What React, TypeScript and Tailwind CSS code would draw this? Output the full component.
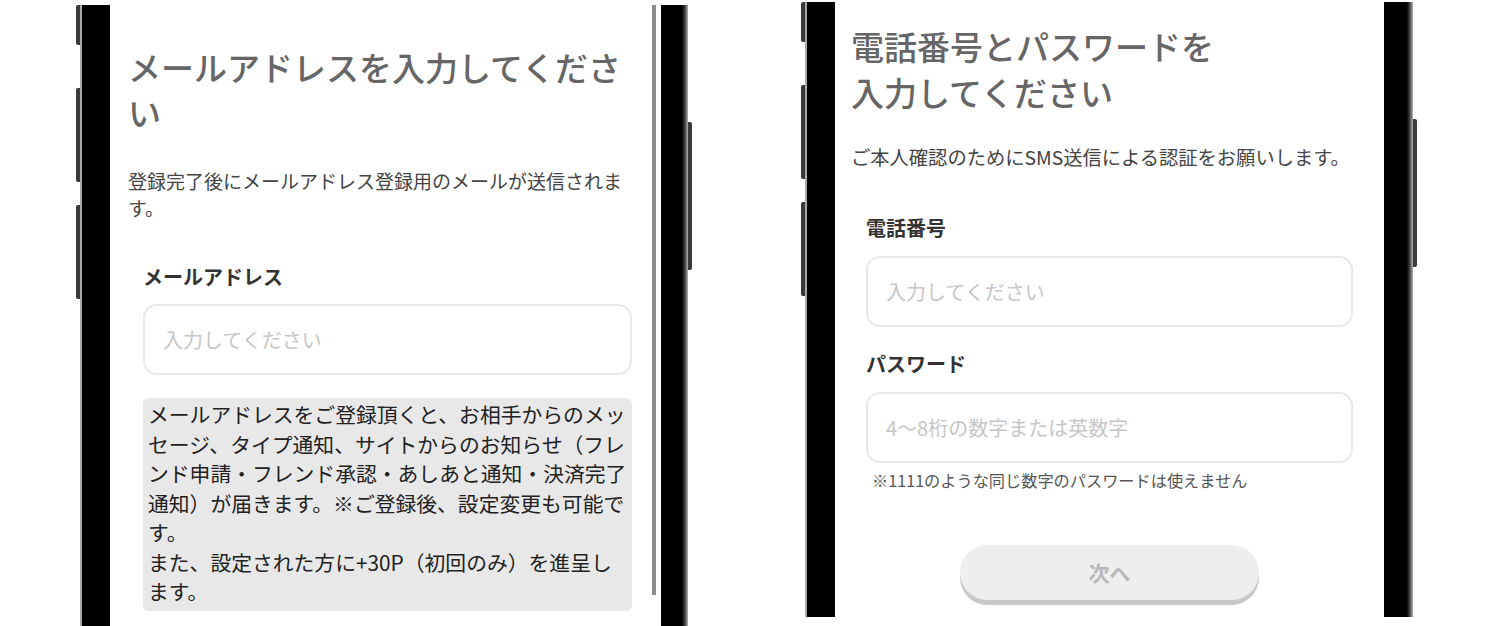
const jp = { fontFamily: '"Noto Sans CJK JP", "Noto Sans", sans-serif' }

function SideButtons({ side }: { side: 'left' | 'right' }) {
  if (side === 'right') {
    return (
      <div className="flex w-[5px] flex-col">
        <div className="mt-[117px] h-[148px] w-[4px] rounded-r-[2px] bg-[#3a3a3a]" />
      </div>
    )
  }
  return (
    <div className="flex w-[4px] flex-col items-end">
      <div className="h-[40px] w-[4px] rounded-l-[2px] bg-[#3a3a3a]" />
      <div className="mt-[43px] h-[94px] w-[4px] rounded-l-[2px] bg-[#3a3a3a]" />
      <div className="mt-[23px] h-[94px] w-[4px] rounded-l-[2px] bg-[#3a3a3a]" />
    </div>
  )
}

function PhoneFrame({
  children,
  height,
  className,
  rightBezel,
}: {
  children: React.ReactNode
  height: string
  className?: string
  rightBezel: string
}) {
  return (
    <div className={`flex shrink-0 ${height} ${className ?? ''}`}>
      <SideButtons side="left" />
      <div className="w-[30px] border-l-2 border-[#a8a8a8] bg-black" />
      {children}
      <div className={`${rightBezel} bg-[linear-gradient(to_right,#000_0%,#000_78%,#3c3c3c_88%,#b4b4b4_100%)]`} />
      <SideButtons side="right" />
    </div>
  )
}

function EmailScreen() {
  return (
    <div className="flex w-[551px] bg-white">
      <div className="flex w-[542px] flex-col pl-[18px] pr-[18px] pt-[40px]">
        <h1 className="text-[33px] leading-[45px] font-medium text-[#666]">メールアドレスを入力してください</h1>
        <p className="mt-[32px] text-[19px] leading-[27px] text-[#444]">
          登録完了後にメールアドレス登録用のメールが送信されます。
        </p>
        <div className="ml-[15px] flex w-[489px] flex-col">
          <label className="mt-[42px] text-[20px] leading-[28px] font-bold text-[#333]">メールアドレス</label>
          <input
            placeholder="入力してください"
            className="mt-[13px] h-[71px] rounded-[14px] border-2 border-[#e8e8e8] bg-white px-[18px] text-[20px] outline-none placeholder:text-[#c6c6c6]"
          />
          <div className="mt-[23px] rounded-[6px] bg-[#e8e8e8] pt-[2px] pr-[3px] pb-[4px] pl-[5px] text-[20.8px] leading-[29.5px] text-[#222]">
            メールアドレスをご登録頂くと、お相手からのメッセージ、タイプ通知、サイトからのお知らせ（フレンド申請・フレンド承認・あしあと通知・決済完了通知）が届きます。※ご登録後、設定変更も可能です。
            <br />
            また、設定された方に+30P（初回のみ）を進呈します。
          </div>
        </div>
      </div>
      <div className="h-[590px] w-[4px] bg-[#8c8c8c]" />
    </div>
  )
}

function PasswordScreen() {
  return (
    <div className="flex w-[549px] flex-col bg-white pt-[21px] pl-[16px]">
      <h1 className="text-[33px] leading-[46px] font-medium text-[#666]">
        電話番号とパスワードを
        <br />
        入力してください
      </h1>
      <p className="mt-[29px] text-[19.3px] leading-[27px] text-[#444]">ご本人確認のためにSMS送信による認証をお願いします。</p>
      <div className="ml-[15px] flex w-[487px] flex-col">
        <label className="mt-[43px] text-[20px] leading-[28px] font-bold text-[#333]">電話番号</label>
        <input
          placeholder="入力してください"
          className="mt-[14px] h-[71px] rounded-[14px] border-2 border-[#e8e8e8] bg-white px-[18px] text-[20px] outline-none placeholder:text-[#c6c6c6]"
        />
        <label className="mt-[23px] text-[20px] leading-[28px] font-bold text-[#333]">パスワード</label>
        <input
          type="password"
          placeholder="4〜8桁の数字または英数字"
          className="mt-[14px] h-[71px] rounded-[14px] border-2 border-[#e8e8e8] bg-white px-[18px] text-[20px] outline-none placeholder:text-[#c6c6c6]"
        />
        <p className="mt-[7px] ml-[6px] text-[16.2px] leading-[20px] text-[#555]">※1111のような同じ数字のパスワードは使えません</p>
        <button className="mx-auto mt-[55px] h-[55px] w-[299px] rounded-full bg-[#eeeeee] text-[21px] font-bold text-[#b8b8b8] shadow-[0_5px_0_#c8c8c8]">
          次へ
        </button>
      </div>
    </div>
  )
}

export default function App() {
  return (
    <div className="flex h-[626px] w-[1498px] items-start overflow-hidden bg-white" style={jp}>
      <PhoneFrame height="h-[640px]" className="mt-[5px] ml-[76px]" rightBezel="w-[27px]">
        <EmailScreen />
      </PhoneFrame>
      <PhoneFrame height="h-[615px]" className="mt-[2px] ml-[108px]" rightBezel="w-[29px]">
        <PasswordScreen />
      </PhoneFrame>
    </div>
  )
}
